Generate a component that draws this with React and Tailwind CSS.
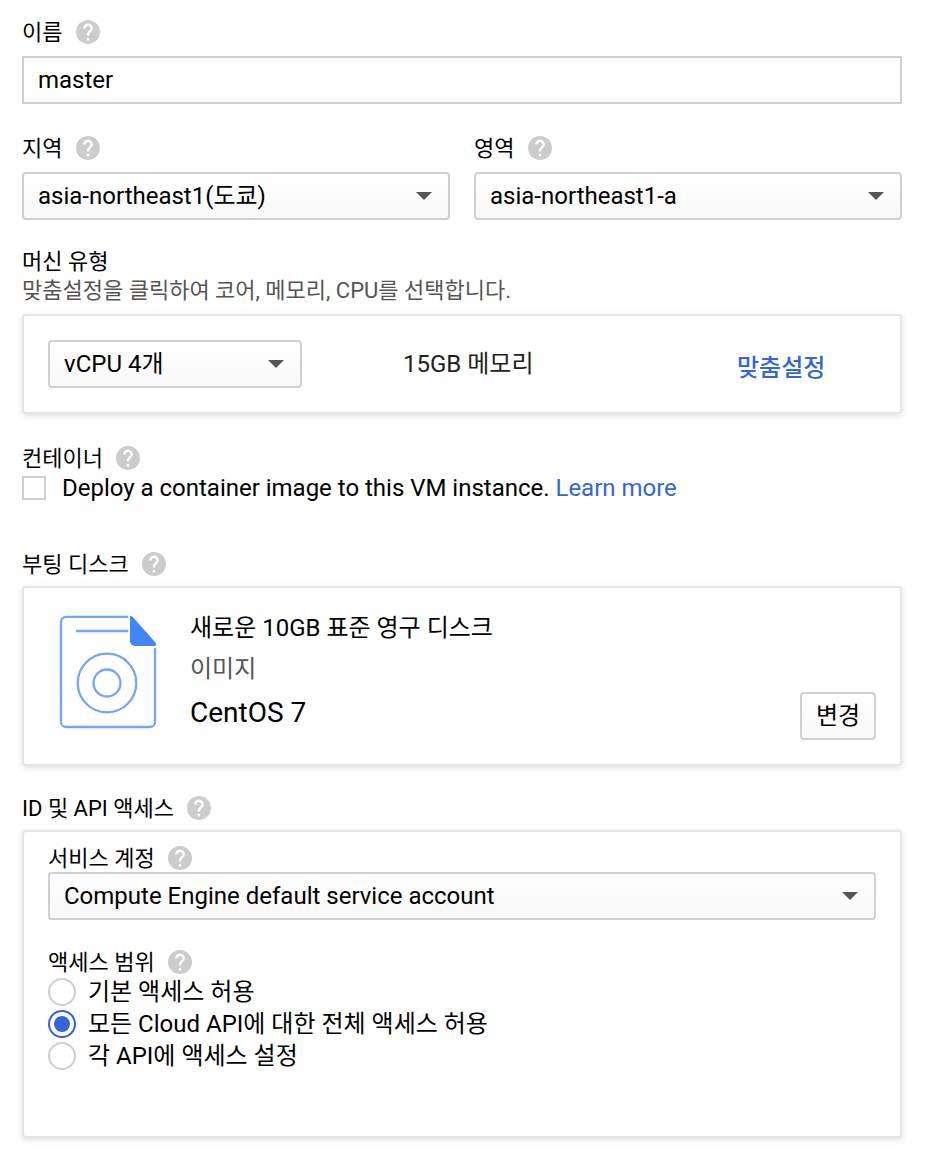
import React from "react";

function HelpIcon() {
  return (
    <svg className="ml-[13.4px] size-6 shrink-0" viewBox="2 2 20 20" fill="#cccccc" aria-hidden="true">
      <path d="M12 2C6.48 2 2 6.48 2 12s4.48 10 10 10 10-4.48 10-10S17.52 2 12 2zm1 17h-2v-2h2v2zm2.07-7.75l-.9.92C13.45 12.9 13 13.5 13 15h-2v-.5c0-1.1.45-2.1 1.17-2.83l1.24-1.26c.37-.36.59-.86.59-1.41 0-1.1-.9-2-2-2s-2 .9-2 2H8c0-2.21 1.79-4 4-4s4 1.79 4 4c0 .88-.36 1.68-.93 2.25z" />
    </svg>
  );
}

function Label({ children }) {
  return (
    <div className="flex h-6 items-center whitespace-nowrap text-[22px] leading-6">
      <span className="pt-0.5">{children}</span>
      <HelpIcon />
    </div>
  );
}

function Select({ children, className = "" }) {
  return (
    <button
      type="button"
      className={
        "flex h-12 items-center justify-between rounded-[4px] border-2 border-[#d0d0d0] bg-linear-to-b from-white to-[#f8f8f8] pl-3.5 pr-4 text-left text-2xl leading-[44px] " +
        className
      }
    >
      <span className="whitespace-nowrap">{children}</span>
      <svg className="h-2 w-4" viewBox="0 0 16 8" fill="#555555" aria-hidden="true">
        <path d="M0 0h16L8 8z" />
      </svg>
    </button>
  );
}

function Card({ children, className = "" }) {
  return (
    <div
      className={
        "rounded-[4px] border-2 border-[#e5e5e5] bg-white shadow-[0_2px_6px_rgba(0,0,0,0.13)] " + className
      }
    >
      {children}
    </div>
  );
}

function DiskIcon() {
  return (
    <svg className="h-[116px] w-[100px] shrink-0" viewBox="0 0 100 116" fill="none" aria-hidden="true">
      <g stroke="#73a5f8" strokeWidth="2.3">
        <path d="M70.300 2.800H8a5 5 0 0 0-5 5V108a5 5 0 0 0 5 5h84a5 5 0 0 0 5-5V34" />
        <path d="M18 17h52.300" />
        <circle cx="49" cy="69" r="29.300" />
        <circle cx="49" cy="69" r="13.500" />
      </g>
      <path d="M72 2c1.200 0 2.200.4 3 1.300L97.400 28.500c1.200 1.500.8 3.500-1 3.500H77a5 5 0 0 1-5-5z" fill="#4285f4" />
    </svg>
  );
}

function Radio({ checked, children }) {
  return (
    <label className="flex h-8 items-center whitespace-nowrap text-2xl leading-8">
      <span
        className={
          checked
            ? "flex size-7 items-center justify-center rounded-full border-2 border-[#3367d6]"
            : "flex size-7 items-center justify-center rounded-full border-2 border-[#d0d0d0]"
        }
      >
        {checked && <span className="size-4 rounded-full bg-[#3367d6]" />}
      </span>
      <span className="ml-3">{children}</span>
    </label>
  );
}

export default function App() {
  return (
    <main className="h-[1160px] w-[936px] bg-white pl-[22px] pr-[34px] pt-5 font-[Roboto,'Noto_Sans_CJK_KR',sans-serif] text-black">
      <Label>이름</Label>
      <input
        readOnly
        value="master"
        className="mt-3 block h-12 w-full border-2 border-[#d0d0d0] bg-white px-3.5 text-2xl outline-none"
      />

      <div className="mt-8 grid grid-cols-2 gap-6">
        <div>
          <Label>지역</Label>
          <Select className="mt-3 w-full">asia-northeast1(도쿄)</Select>
        </div>
        <div>
          <Label>영역</Label>
          <Select className="mt-3 w-full">asia-northeast1-a</Select>
        </div>
      </div>

      <h2 className="mt-7 h-7 text-[22px] leading-7">머신 유형</h2>
      <p className="mt-px h-7 text-[22px] leading-7 text-[#555555]">
        맞춤설정을 클릭하여 코어, 메모리, CPU를 선택합니다.
      </p>
      <Card className="mt-[9px] flex h-[100px] items-center px-6">
        <Select className="w-[254px]">vCPU 4개</Select>
        <span className="ml-[101px] w-[334px] whitespace-nowrap text-2xl leading-[44px] text-[#212121]">
          15GB 메모리
        </span>
        <a className="mt-2 whitespace-nowrap text-2xl font-medium text-[#3367d6]">맞춤설정</a>
      </Card>

      <div className="mt-8">
        <Label>컨테이너</Label>
      </div>
      <label className="mt-1.5 flex h-6 items-center whitespace-nowrap text-2xl leading-6">
        <span className="size-6 border-2 border-[#d0d0d0]" />
        <span className="ml-4 tracking-[-0.01px]">
          Deploy a container image to this VM instance. <a className="text-[#3367d6]">Learn more</a>
        </span>
      </label>

      <div className="mt-[52px]">
        <Label>부팅 디스크</Label>
      </div>
      <Card className="mt-2.5 flex h-[180px] pl-[34px] pr-6">
        <div className="pt-[26px]">
          <DiskIcon />
        </div>
        <div className="ml-8 flex-1 whitespace-nowrap pt-[22px]">
          <div className="h-9 text-2xl leading-9">새로운 10GB 표준 영구 디스크</div>
          <div className="mt-[3px] h-10 text-2xl leading-10 text-[#555555]">이미지</div>
          <div className="mt-1 h-10 text-[28px] leading-10">CentOS 7</div>
        </div>
        <button
          type="button"
          className="mb-6 h-12 w-[76px] self-end whitespace-nowrap rounded-[4px] border-2 border-[#d0d0d0] bg-linear-to-b from-white to-[#f8f8f8] text-2xl leading-[44px]"
        >
          변경
        </button>
      </Card>

      <div className="mt-[30px]">
        <Label>ID 및 API 액세스</Label>
      </div>
      <Card className="mt-2.5 h-[308px] px-6 pt-3.5">
        <Label>서비스 계정</Label>
        <Select className="mt-0.5 w-full">Compute Engine default service account</Select>
        <div className="mt-[30px]">
          <Label>액세스 범위</Label>
        </div>
        <div className="mt-0.5">
          <Radio>기본 액세스 허용</Radio>
          <Radio checked>모든 Cloud API에 대한 전체 액세스 허용</Radio>
          <Radio>각 API에 액세스 설정</Radio>
        </div>
      </Card>
    </main>
  );
}
